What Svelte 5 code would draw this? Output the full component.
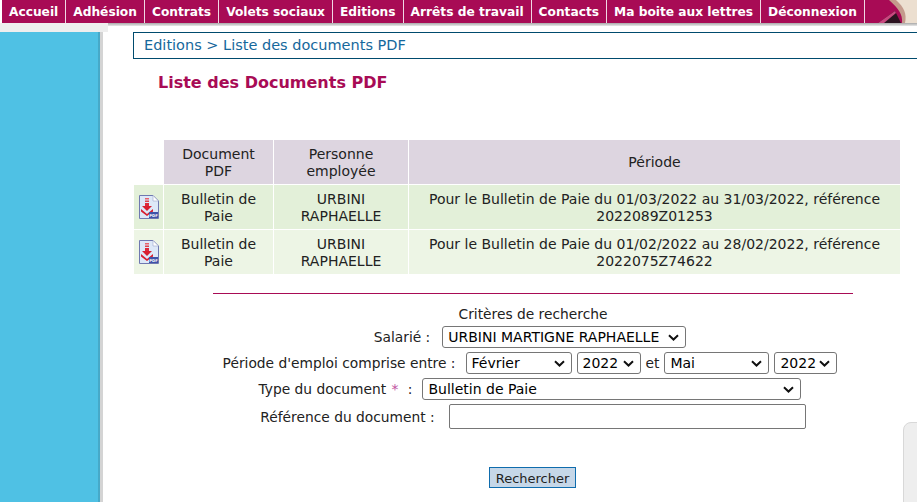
<script>
    const menu = [
        "Accueil",
        "Adhésion",
        "Contrats",
        "Volets sociaux",
        "Editions",
        "Arrêts de travail",
        "Contacts",
        "Ma boite aux lettres",
        "Déconnexion",
    ];

    const rows = [
        {
            doc: "Bulletin de Paie",
            person: "URBINI RAPHAELLE",
            period: "Pour le Bulletin de Paie du 01/03/2022 au 31/03/2022, référence 2022089Z01253",
        },
        {
            doc: "Bulletin de Paie",
            person: "URBINI RAPHAELLE",
            period: "Pour le Bulletin de Paie du 01/02/2022 au 28/02/2022, référence 2022075Z74622",
        },
    ];
</script>

<div class="page">
    <nav class="menu">
        {#each menu as item}
            <a href="#top" class="menu-item">{item}</a>
        {/each}
        <div class="portrait">
            <svg width="51" height="23" viewBox="0 0 51 23">
                <path d="M23 0 L51 0 L51 23 L36 23 C37 14 32 8 23 0 Z" fill="#c49a8c" />
                <path d="M30 0 L51 0 L51 23 L39 23 C41 14 38 7 30 0 Z" fill="#ecdfd0" />
                <path d="M12 23 L29 11 L35 23 Z" fill="#2c1420" />
                <path d="M12 23 L29 11 L30 13 L18 23 Z" fill="#c9487f" />
            </svg>
        </div>
    </nav>
    <div class="menu-shadow"></div>

    <div class="body">
        <aside class="side"><div class="side-tab"></div></aside>
        <main class="content">
            <div class="crumb">Editions &gt; Liste des documents PDF</div>
            <h1>Liste des Documents PDF</h1>

            <table>
                <thead>
                    <tr>
                        <th class="blank"></th>
                        <th class="c-doc">Document PDF</th>
                        <th class="c-person">Personne employée</th>
                        <th>Période</th>
                    </tr>
                </thead>
                <tbody>
                    {#each rows as row, i}
                        <tr class:alt={i % 2 === 1}>
                            <td class="icon">
                                <svg width="20" height="24" viewBox="0 0 20 24">
                                    <path d="M.5.5H14L19.500 6V23.500H.5Z" fill="#dde8f8" stroke="#6f78b0" />
                                    <path d="M14 .5V6H19.500Z" fill="#fff" stroke="#9aa4ca" stroke-width=".6" />
                                    <rect x="6" y="3" width="4" height="1.500" fill="#e8606a" />
                                    <rect x="6" y="5.500" width="4" height="1.500" fill="#e0404a" />
                                    <rect x="6" y="8" width="4" height="3" fill="#dd2a3a" />
                                    <path d="M3 11H13L8 16Z" fill="#d81f30" />
                                    <path d="M2 14L8 19L14 14V16.500L8 21L2 16.500Z" fill="#d81f30" />
                                    <rect x="10" y="17" width="9" height="6" fill="#3f52a8" />
                                    <text x="10.300" y="22" class="pdf">PDF</text>
                                </svg>
                            </td>
                            <td>{row.doc}</td>
                            <td>{row.person}</td>
                            <td>{row.period}</td>
                        </tr>
                    {/each}
                </tbody>
            </table>

            <hr />

            <form class="search" onsubmit={(e) => e.preventDefault()}>
                <div class="legend">Critères de recherche</div>
                <div class="line l-salarie">
                    <label for="sal">Salarié :</label>
                    <select id="sal"><option>URBINI MARTIGNE RAPHAELLE</option></select>
                </div>
                <div class="line l-periode">
                    <label for="m1">Période d'emploi comprise entre :</label>
                    <select id="m1" class="month"><option>Février</option></select>
                    <select class="year"><option>2022</option></select>
                    <span>et</span>
                    <select class="month m2"><option>Mai</option></select>
                    <select class="year y2"><option>2022</option></select>
                </div>
                <div class="line l-type">
                    <label for="typ">Type du document <span class="req">*</span> :</label>
                    <select id="typ" class="type"><option>Bulletin de Paie</option></select>
                </div>
                <div class="line l-ref">
                    <label for="ref">Référence du document :</label>
                    <input id="ref" type="text" />
                </div>
                <button type="submit">Rechercher</button>
            </form>
        </main>
    </div>
    <div class="corner"></div>
</div>

<style>
    :global(body) {
        margin: 0;
        background: #fff;
        overflow: hidden;
    }

    .page {
        position: relative;
        width: 917px;
        height: 502px;
        overflow: hidden;
        font-family: "DejaVu Sans", Verdana, sans-serif;
        font-size: 14px;
        color: #222;
    }

    .menu {
        display: flex;
        height: 23px;
        margin-left: 2px;
        background: #a80b55;
    }

    .menu-item {
        display: flex;
        align-items: center;
        padding: 0 7px;
        border-right: 1px solid #f0d8e4;
        color: #fff;
        font-size: 12.210px;
        font-weight: bold;
        text-decoration: none;
        white-space: nowrap;
    }

    .portrait {
        margin-left: auto;
        height: 23px;
    }

    .menu-shadow {
        height: 3px;
        background: linear-gradient(#a8a8a8, #e8e8e8);
    }

    .body {
        display: flex;
        height: 476px;
    }

    .side {
        position: relative;
        width: 100px;
        margin-top: 6px;
        border-right: 3px solid #d4d4d4;
        background: #4fc1e4;
        box-shadow: inset -2px 0 0 #46a9c8;
    }

    .side-tab {
        position: absolute;
        left: 0;
        top: -9px;
        width: 108px;
        height: 9px;
        background: #eeeeee;
    }

    .content {
        flex: 1;
        padding-top: 6px;
        min-width: 0;
    }

    .crumb {
        height: 25px;
        margin-left: 30px;
        padding-left: 10px;
        border: solid #004b6e;
        border-width: 1px 0 1px 1px;
        line-height: 25px;
        color: #16689c;
        font-size: 14.500px;
    }

    h1 {
        margin: 14px 0 0 55px;
        color: #a80b55;
        font-size: 16px;
        font-weight: bold;
        line-height: 20px;
    }

    table {
        width: 768px;
        margin: 46px 0 0 30px;
        border-collapse: collapse;
        table-layout: fixed;
        text-align: center;
    }

    th,
    td {
        box-sizing: border-box;
        height: 45px;
        padding: 1px 10px 0;
        border: 1px solid #fff;
        font-weight: normal;
        line-height: 17px;
    }

    th {
        background: #ddd5e0;
    }

    th.blank {
        width: 30px;
        padding: 0;
        background: none;
    }

    .c-doc {
        width: 110px;
    }

    .c-person {
        width: 135px;
    }

    tbody tr {
        background: #e3f0d9;
    }

    tbody tr.alt {
        background: #edf5e5;
    }

    td.icon {
        padding: 0;
    }

    .icon svg {
        display: block;
        margin: 0 auto;
    }

    .pdf {
        fill: #fff;
        font-size: 3.800px;
        font-weight: bold;
    }

    hr {
        width: 640px;
        height: 1px;
        margin: 18px 0 0 110px;
        border: 0;
        background: #a80b55;
    }

    .search {
        display: flex;
        flex-direction: column;
        align-items: center;
        width: 640px;
        margin-left: 110px;
    }

    .legend {
        margin-top: 12px;
        line-height: 17px;
        font-size: 13.800px;
    }

    .line {
        display: flex;
        align-items: center;
        justify-content: center;
        margin-top: 4px;
        padding-right: 6px;
        font-size: 13.800px;
    }

    .line label {
        margin-right: 10px;
    }

    .l-salarie {
        margin-top: 3px;
    }

    .l-salarie label {
        margin-right: 12px;
    }

    .l-ref {
        padding-right: 0;
    }

    .l-ref label {
        margin-right: 14px;
    }

    .req {
        margin: 0 5px 0 1px;
        color: #c050a0;
    }

    select {
        box-sizing: border-box;
        height: 22px;
        padding: 0 20px 0 5px;
        border: 1px solid #767676;
        border-radius: 3px;
        appearance: none;
        background: #fff url("data:image/svg+xml,%3Csvg xmlns='http://www.w3.org/2000/svg' width='11' height='7'%3E%3Cpath d='M1 1.200l4.500 4.300 4.500-4.300' fill='none' stroke='%23111' stroke-width='2'/%3E%3C/svg%3E") no-repeat right 6px center;
        color: #000;
        font: inherit;
        font-size: 14px;
    }

    #sal {
        width: 244px;
    }

    .month {
        width: 106px;
        margin-right: 5px;
    }

    .year {
        width: 64px;
    }

    .l-periode span {
        margin: 0 5px;
    }

    .m2 {
        width: 105px;
    }

    .y2 {
        width: 63px;
    }

    .type {
        width: 379px;
    }

    input {
        box-sizing: border-box;
        width: 357px;
        height: 25px;
        border: 1px solid #767676;
        border-radius: 2px;
        background: #fff;
    }

    button {
        width: 87px;
        height: 21px;
        margin: 38px 1px 0 0;
        padding: 1px 0 0;
        border: 1px solid #0f6cad;
        background: #c6d7e8;
        color: #222;
        font: inherit;
        font-size: 13px;
    }

    .corner {
        position: absolute;
        left: 903px;
        top: 422px;
        width: 30px;
        height: 100px;
        border: 1px solid #d8d8d8;
        border-radius: 8px;
        background: #eeeeee;
    }
</style>
